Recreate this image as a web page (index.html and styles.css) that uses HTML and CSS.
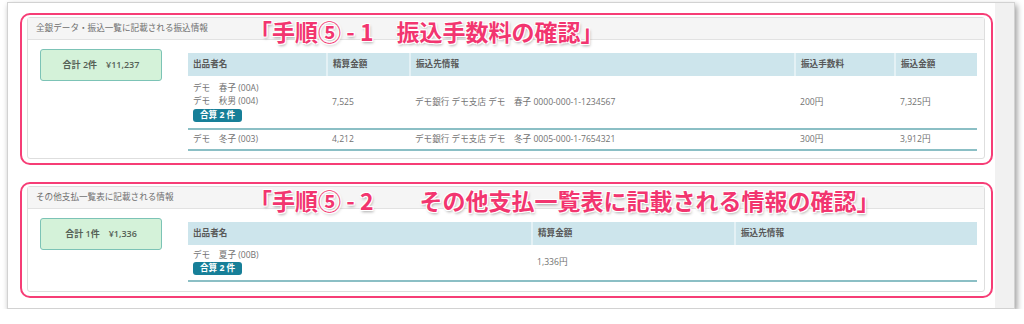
FILE: index.html
```html
<!DOCTYPE html>
<html lang="ja">
<head>
    <meta charset="UTF-8">
    <title>振込情報の確認</title>
    <link rel="stylesheet" href="styles.css">
</head>
<body>
    <div class="sheet">
        <div class="sheet-main">

            <div class="callout">
                <span class="callout-label">「手順⑤ - 1　振込手数料の確認」</span>
                <div class="panel">
                    <div class="panel-heading">全銀データ・振込一覧に記載される振込情報</div>
                    <div class="panel-body">
                        <div class="summary">合計 2件　¥11,237</div>
                        <table class="list">
                            <colgroup>
                                <col style="width: 139px">
                                <col style="width: 83px">
                                <col style="width: 385px">
                                <col style="width: 100px">
                                <col style="width: 82px">
                            </colgroup>
                            <thead>
                                <tr>
                                    <th>出品者名</th>
                                    <th>精算金額</th>
                                    <th>振込先情報</th>
                                    <th>振込手数料</th>
                                    <th>振込金額</th>
                                </tr>
                            </thead>
                            <tbody>
                                <tr class="row-merged">
                                    <td>
                                        <div class="name">デモ　春子 (00A)</div>
                                        <div class="name">デモ　秋男 (004)</div>
                                        <span class="badge">合算 2 件</span>
                                    </td>
                                    <td>7,525</td>
                                    <td>デモ銀行 デモ支店 デモ　春子 0000-000-1-1234567</td>
                                    <td>200円</td>
                                    <td>7,325円</td>
                                </tr>
                                <tr class="row-single">
                                    <td>デモ　冬子 (003)</td>
                                    <td>4,212</td>
                                    <td>デモ銀行 デモ支店 デモ　冬子 0005-000-1-7654321</td>
                                    <td>300円</td>
                                    <td>3,912円</td>
                                </tr>
                            </tbody>
                        </table>
                    </div>
                </div>
            </div>

            <div class="callout">
                <span class="callout-label">「手順⑤ - 2　　その他支払一覧表に記載される情報の確認」</span>
                <div class="panel">
                    <div class="panel-heading">その他支払一覧表に記載される情報</div>
                    <div class="panel-body">
                        <div class="summary">合計 1件　¥1,336</div>
                        <table class="list">
                            <colgroup>
                                <col style="width: 344px">
                                <col style="width: 203px">
                                <col style="width: 242px">
                            </colgroup>
                            <thead>
                                <tr>
                                    <th>出品者名</th>
                                    <th>精算金額</th>
                                    <th>振込先情報</th>
                                </tr>
                            </thead>
                            <tbody>
                                <tr class="row-other">
                                    <td>
                                        <div class="name">デモ　夏子 (00B)</div>
                                        <span class="badge">合算 2 件</span>
                                    </td>
                                    <td>1,336円</td>
                                    <td></td>
                                </tr>
                            </tbody>
                        </table>
                    </div>
                </div>
            </div>

        </div>
        <div class="sheet-side"></div>
    </div>
</body>
</html>
```

FILE: styles.css
```css
* {
    margin: 0;
    padding: 0;
    box-sizing: border-box;
}

body {
    font-family: "Open Sans", "Noto Sans CJK JP", sans-serif;
    background: #fff;
    padding: 2px 9px 0 7px;
    color: #727272;
}

/* page card with the grey gutter on the right */
.sheet {
    display: flex;
    width: 1008px;
    border: 1px solid #d2d2d2;
    background: #fff;
    box-shadow: 2px 3px 6px rgba(0, 0, 0, 0.4);
}

.sheet-main {
    flex: 1;
    padding: 10px 2px 10px 12px;
    display: flex;
    flex-direction: column;
    gap: 17px;
}

.sheet-side {
    width: 19px;
    background: #f1f1f1;
}

/* pink step frame */
.callout {
    position: relative;
    border: 2px solid #f63d76;
    border-radius: 10px;
    padding: 2px 6px 4px 5px;
}

.callout-label {
    position: absolute;
    top: 5px;
    left: 227px;
    font-family: "Noto Sans CJK JP", sans-serif;
    font-size: 23px;
    font-weight: 700;
    line-height: 23px;
    white-space: pre;
    color: #f2356f;
    text-shadow:
        -1px -1px 0 #fff,
        1px -1px 0 #fff,
        -1px 1px 0 #fff,
        1px 1px 0 #fff,
        0 0 2px #fff,
        1px 2px 3px rgba(0, 0, 0, 0.35);
}

/* panel */
.panel {
    border: 1px solid #dedede;
    border-radius: 3px;
    background: #fff;
}

.panel-heading {
    height: 22px;
    line-height: 21px;
    padding-left: 8px;
    background: #f5f5f5;
    border-bottom: 1px solid #e2e2e2;
    font-size: 8.6px;
    color: #6e6e6e;
}

.panel-body {
    display: flex;
    align-items: flex-start;
    padding: 9px 7px 7px 12px;
}

.callout + .callout .panel-body {
    padding-bottom: 9px;
}

.summary {
    width: 122px;
    height: 32px;
    flex-shrink: 0;
    background: #d4f2d9;
    border: 1px solid #7cc3b6;
    border-radius: 3px;
    text-align: center;
    line-height: 30px;
    font-size: 9px;
    font-weight: 600;
    color: #556055;
}

/* list table */
.list {
    flex: 1;
    margin: 4px 0 0 26px;
    border-collapse: collapse;
    table-layout: fixed;
    font-size: 8.6px;
    line-height: 13px;
}

.list th {
    height: 23px;
    padding: 0 5px;
    text-align: left;
    font-weight: 700;
    color: #585858;
    background: #cde5ec;
    border-left: 2px solid #e4f1f5;
}

.list th:first-child {
    border-left: none;
}

.list td {
    padding: 0 5px;
    vertical-align: middle;
    white-space: nowrap;
    border-bottom: 2px solid #8bbfc5;
}

.row-merged td {
    padding-top: 6px;
    padding-bottom: 6px;
}

.row-single td {
    padding-top: 3px;
    padding-bottom: 3px;
}

.row-other td {
    padding-top: 4px;
    padding-bottom: 5px;
}

.name {
    height: 13px;
}

.badge {
    display: inline-block;
    margin-top: 1px;
    height: 13px;
    padding: 0 7px;
    border-radius: 3px;
    background: #177f98;
    color: #fff;
    font-weight: 700;
    font-size: 8.6px;
    line-height: 13px;
    vertical-align: top;
}

.row-other .badge {
    margin-top: 0;
}
```
